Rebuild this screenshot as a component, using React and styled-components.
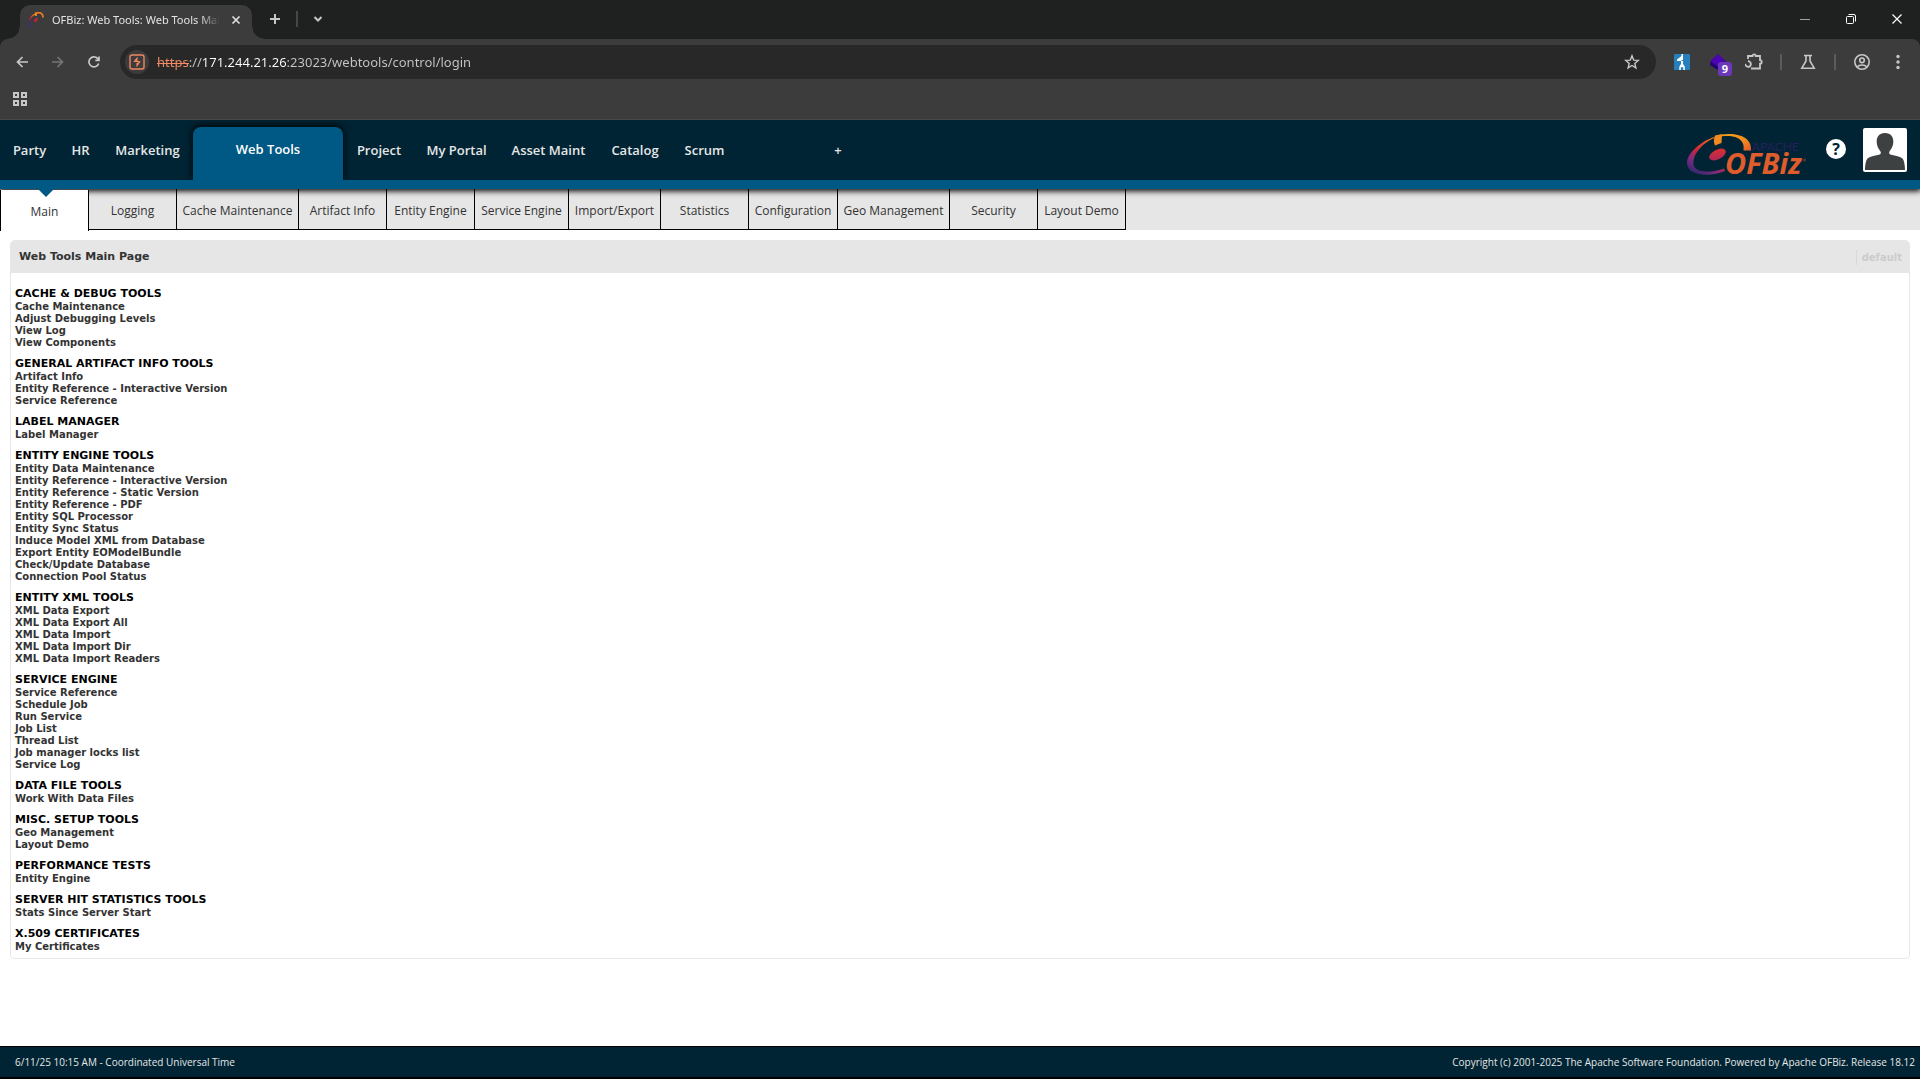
import React from 'react';
import styled, { createGlobalStyle, css } from 'styled-components';

const ui = '"Open Sans", "Noto Sans", sans-serif';
const chromeFont = '"Noto Sans", "Open Sans", sans-serif';
const verdana = '"DejaVu Sans", Verdana, sans-serif';

const GlobalStyle = createGlobalStyle`
  *, *::before, *::after { box-sizing: border-box; }
  body { margin: 0; background: #fff; font-family: ${verdana}; }
  a { text-decoration: none; color: inherit; }
  button { border: 0; padding: 0; background: none; color: inherit; font: inherit; cursor: pointer; }
  h1, h2, ul { margin: 0; padding: 0; list-style: none; }
  svg { display: block; flex: none; }
`;

const Page = styled.div`
  min-height: 100vh;
  display: flex;
  flex-direction: column;
`;

/* ---------- browser window ---------- */

const TabStrip = styled.div`
  display: flex;
  height: 39px;
  padding-left: 20px;
  background: #1f2121;
  color: #e3e3e3;
`;

const BrowserTab = styled.div`
  position: relative;
  display: flex;
  align-items: center;
  width: 232px;
  margin-top: 5px;
  padding: 0 8px 5px;
  gap: 8px;
  border-radius: 10px 10px 0 0;
  background: #3c3c3c;

  &::before,
  &::after {
    content: '';
    position: absolute;
    bottom: 0;
    width: 12px;
    height: 12px;
  }
  &::before {
    left: -12px;
    background: radial-gradient(circle at 0 0, transparent 11px, #3c3c3c 12px);
  }
  &::after {
    right: -12px;
    background: radial-gradient(circle at 100% 0, transparent 11px, #3c3c3c 12px);
  }
`;

const TabTitle = styled.span`
  flex: 1;
  overflow: hidden;
  white-space: nowrap;
  font: 11px/20px ${chromeFont};
  mask-image: linear-gradient(to right, #000 148px, transparent 168px);
`;

const IconButton = styled.button`
  display: flex;
  align-items: center;
  justify-content: center;
  width: ${(p) => p.$w || 36}px;
  height: ${(p) => p.$h || 34}px;
  color: ${(p) => p.$color || '#c7c7c7'};
`;

const StripDivider = styled.span`
  width: 2px;
  height: 16px;
  margin-top: 11px;
  background: #474747;
`;

const WindowControls = styled.div`
  display: flex;
  margin-left: auto;
`;

const Chrome = styled.div`
  background: #1f2121;
`;

const ChromeBody = styled.div`
  border-radius: 8px 8px 0 0;
  border-bottom: 1px solid #484848;
  background: #3c3c3c;
`;

const Toolbar = styled.div`
  display: flex;
  align-items: center;
  height: 45px;
  padding: 1px 4px 0;
`;

const Address = styled.label`
  flex: 1;
  display: flex;
  align-items: center;
  height: 34px;
  margin: 0 8px;
  padding-left: 5px;
  border-radius: 17px;
  background: #282828;
`;

const SiteBadge = styled.span`
  display: flex;
  align-items: center;
  justify-content: center;
  width: 24px;
  height: 24px;
  margin-right: 8px;
  border-radius: 50%;
  background: #3c3c3c;
`;

const UrlInput = styled.input`
  flex: 1;
  height: 22px;
  padding: 0;
  border: 0;
  outline: 0;
  font: 13px/22px ${chromeFont};
  color: transparent;
  background:
    linear-gradient(#f28b64, #f28b64) 0 12px / 32px 1px no-repeat padding-box,
    linear-gradient(to right, #f28b64 32px, #c7c7c7 32px, #c7c7c7 45px, #fff 45px, #fff 129px, #c7c7c7 129px) text;
`;

const ToolDivider = styled.span`
  width: 2px;
  height: 16px;
  margin: 0 8px;
  background: #5c5c5c;
`;

const Extension = styled.span`
  position: relative;
  display: block;
  width: 24px;
  height: 24px;
`;

const Badge = styled.span`
  position: absolute;
  left: 12px;
  top: 12px;
  width: 14px;
  height: 14px;
  border-radius: 3px;
  background: #6b38bb;
  color: #fff;
  font: 700 11px/14px ${ui};
  text-align: center;
`;

const Bookmarks = styled.div`
  display: flex;
  height: 35px;
  padding-left: 2px;
`;

/* ---------- application header ---------- */

const Header = styled.header`
  position: relative;
  z-index: 1;
  display: flex;
  height: 69px;
  border-bottom: 9px solid #005884;
  background: #002434;
  box-shadow: 0 1px 6px 1px #000;
  clip-path: inset(0 0 -12px 0);
`;

const AppNav = styled.nav`
  display: flex;
  color: #e6e6e6;
  font: 600 13px/60px ${ui};
`;

const AppLink = styled.a`
  display: block;
  width: ${(p) => p.$w}px;
  text-align: center;
  white-space: nowrap;
  ${(p) => p.$current && css`
    margin-top: 7px;
    border-radius: 8px 8px 0 0;
    background: #005884;
    box-shadow: 0 -1px 8px #000;
    clip-path: inset(-12px -12px 0 -12px);
    color: #fff;
    line-height: 44px;
  `}
`;

const AddLink = styled.a`
  width: 16px;
  margin-left: 92px;
  text-align: center;
`;

const HeaderTools = styled.div`
  display: flex;
  align-items: flex-start;
  margin-left: auto;
  padding: 8px 13px 0 0;
`;

const HelpButton = styled.button`
  width: 20px;
  height: 20px;
  margin: 11px 17px 0 16px;
  border-radius: 50%;
  background: #fff;
  color: #002434;
  font: 700 16px/20px ${ui};
`;

const Avatar = styled.a`
  display: block;
  padding: 2px;
  border-radius: 2px;
  background: #fff;
`;

const SubNav = styled.nav`
  display: flex;
  height: 41px;
  background: #e6e6e6;
  color: #333;
  font: 12px/43px ${ui};
`;

const SubLink = styled.a`
  position: relative;
  width: ${(p) => p.$w}px;
  height: 41px;
  border-right: 1px solid #000;
  border-bottom: 1px solid #000;
  text-align: center;
  white-space: nowrap;
  ${(p) => p.$current && css`
    z-index: 2;
    margin-top: 1px;
    border-left: 1px solid #000;
    border-bottom: 0;
    background: #fff;
    &::before {
      content: '';
      position: absolute;
      left: 37px;
      top: -1px;
      border: 8px solid transparent;
      border-top-color: #005884;
      border-bottom: 0;
    }
  `}
`;

/* ---------- content ---------- */

const Main = styled.main`
  flex: 1;
  padding: 10px;
`;

const Panel = styled.section`
  border: 1px solid #e6e6e6;
  border-top: 0;
  border-radius: 5px;
  overflow: hidden;
`;

const PanelBar = styled.div`
  display: flex;
  align-items: center;
  justify-content: space-between;
  height: 33px;
  padding: 1px 7px 0 8px;
  background: #e6e6e6;
`;

const PanelTitle = styled.h1`
  color: #333;
  font: 700 11px/16px ${verdana};
`;

const DefaultLink = styled.a`
  padding-left: 5px;
  border-left: 1px solid #d8d8d8;
  color: #ccc;
  font: 700 10px/15px ${verdana};
`;

const Groups = styled.div`
  display: flex;
  flex-direction: column;
  gap: 8px;
  padding: 14px 4px 5px;
`;

const GroupTitle = styled.h2`
  color: #000;
  font: 700 11px/14px ${verdana};
`;

const GroupItem = styled.li`
  color: #333;
  font: 700 10px/12px ${verdana};
`;

const Footer = styled.footer`
  display: flex;
  justify-content: space-between;
  height: 33px;
  padding: 0 5px 0 15px;
  border: solid #000;
  border-width: 1px 0 2px;
  background: #002434;
  color: #e6e6e6;
  font: 10px/30px ${ui};
`;

const apps = [
  ['Party', 59],
  ['HR', 43],
  ['Marketing', 91],
  ['Web Tools', 150],
  ['Project', 72],
  ['My Portal', 83],
  ['Asset Maint', 101],
  ['Catalog', 72],
  ['Scrum', 67],
];

const sections = [
  ['Main', 89],
  ['Logging', 88],
  ['Cache Maintenance', 122],
  ['Artifact Info', 88],
  ['Entity Engine', 88],
  ['Service Engine', 94],
  ['Import/Export', 92],
  ['Statistics', 88],
  ['Configuration', 89],
  ['Geo Management', 112],
  ['Security', 88],
  ['Layout Demo', 88],
];

const groups = [
  ['CACHE & DEBUG TOOLS', ['Cache Maintenance', 'Adjust Debugging Levels', 'View Log', 'View Components']],
  ['GENERAL ARTIFACT INFO TOOLS', ['Artifact Info', 'Entity Reference - Interactive Version', 'Service Reference']],
  ['LABEL MANAGER', ['Label Manager']],
  ['ENTITY ENGINE TOOLS', [
    'Entity Data Maintenance', 'Entity Reference - Interactive Version', 'Entity Reference - Static Version',
    'Entity Reference - PDF', 'Entity SQL Processor', 'Entity Sync Status', 'Induce Model XML from Database',
    'Export Entity EOModelBundle', 'Check/Update Database', 'Connection Pool Status',
  ]],
  ['ENTITY XML TOOLS', ['XML Data Export', 'XML Data Export All', 'XML Data Import', 'XML Data Import Dir', 'XML Data Import Readers']],
  ['SERVICE ENGINE', ['Service Reference', 'Schedule Job', 'Run Service', 'Job List', 'Thread List', 'Job manager locks list', 'Service Log']],
  ['DATA FILE TOOLS', ['Work With Data Files']],
  ['MISC. SETUP TOOLS', ['Geo Management', 'Layout Demo']],
  ['PERFORMANCE TESTS', ['Entity Engine']],
  ['SERVER HIT STATISTICS TOOLS', ['Stats Since Server Start']],
  ['X.509 CERTIFICATES', ['My Certificates']],
];

const Line = ({ size = 16, sw = 2, children, ...rest }) => (
  <svg width={size} height={size} viewBox={`0 0 ${size} ${size}`} fill="none" stroke="currentColor" strokeWidth={sw} {...rest}>
    {children}
  </svg>
);

const Favicon = () => (
  <svg width="16" height="16" viewBox="0 0 16 16" fill="none">
    <defs>
      <linearGradient id="fav" x1="0.8" y1="0" x2="0.2" y2="1">
        <stop offset="0" stopColor="#f7941d" />
        <stop offset="0.4" stopColor="#d2232a" />
        <stop offset="0.8" stopColor="#3b2a80" />
      </linearGradient>
    </defs>
    <path d="M7 2C3.500 4 .8 8 .8 11.500c0 3 2 3.800 4.500 3.200" stroke="url(#fav)" strokeWidth="1.300" />
    <path d="M7 1.500c4-1.500 8-1 8 4" stroke="#f07f22" strokeWidth="1.600" />
    <path d="M8 .5v3.500" stroke="#f07f22" strokeWidth="2" />
    <ellipse cx="8" cy="8" rx="2.300" ry="1.400" transform="rotate(-45 8 8)" fill="#c8203c" />
  </svg>
);

const OfbizLogo = () => (
  <svg width="130" height="49" viewBox="0 3 130 49" role="img" aria-label="Apache OFBiz">
    <defs>
      <linearGradient id="swoosh" x1="0.8" y1="0" x2="0.25" y2="1">
        <stop offset="0" stopColor="#f7941d" />
        <stop offset="0.25" stopColor="#e8502a" />
        <stop offset="0.5" stopColor="#c9263f" />
        <stop offset="0.75" stopColor="#7b2a80" />
        <stop offset="1" stopColor="#2b2a6c" />
      </linearGradient>
      <linearGradient id="arc" x1="0" y1="0" x2="1" y2="1">
        <stop offset="0" stopColor="#f9a11b" />
        <stop offset="0.6" stopColor="#f58a1f" />
        <stop offset="1" stopColor="#e4572e" />
      </linearGradient>
      <linearGradient id="dot" x1="1" y1="0" x2="0" y2="1">
        <stop offset="0" stopColor="#e0322d" />
        <stop offset="1" stopColor="#a8245c" />
      </linearGradient>
    </defs>
    <path d="M34 12C18 18 7 29 7 38c0 9 11 13 24 11.500 5-.5 10-1.500 14-3.500l-1-2.500C38 46 31 47 25 46.500 16 46 12.500 42 13.500 35.500 15 27 23 18 34 13z" fill="url(#swoosh)" />
    <path d="M41 9.500c7-1 15-.8 20.500 1.500 7 3 10 8 9.500 14.500h-7.500c.8-6-1-10-6-12.500-4-2-11-2.300-16.500-1.500z" fill="url(#arc)" />
    <path d="M35 10.500l7-1.500-.5 9-6.500 2.500c-1.500-3-1.500-6.500 0-10z" fill="#f28a22" />
    <ellipse cx="37.500" cy="29.500" rx="9" ry="4.800" transform="rotate(-27 37.500 29.500)" fill="url(#dot)" />
    <text x="72" y="26" fill="#26205a" fontFamily="Lato, sans-serif" fontSize="12">APACHE</text>
    <text x="45" y="49" fill="#e05c2c" fontFamily='"Open Sans", sans-serif' fontSize="29" fontWeight="700" fontStyle="italic">OFBiz</text>
    <circle cx="124.500" cy="35" r="1" fill="none" stroke="#9a4a38" strokeWidth="0.700" />
  </svg>
);

const BrowserChrome = () => (
  <>
    <TabStrip>
      <BrowserTab>
        <Favicon />
        <TabTitle>OFBiz: Web Tools: Web Tools Main Page</TabTitle>
        <IconButton $w={16} $h={16} $color="#e3e3e3" aria-label="Close tab">
          <Line size={10}><path d="M1.500 1.500l7 7M8.500 1.500l-7 7" strokeWidth="1.600" /></Line>
        </IconButton>
      </BrowserTab>
      <IconButton $w={44} $h={38} aria-label="New tab">
        <svg width="12" height="12" viewBox="0 0 12 12" stroke="currentColor" strokeWidth="2"><path d="M7 1v10M2 6h10" /></svg>
      </IconButton>
      <StripDivider />
      <IconButton $w={40} $h={38} aria-label="Search tabs">
        <Line size={10}><path d="M1.500 3L5 6.500 8.500 3" /></Line>
      </IconButton>
      <WindowControls>
        <IconButton $w={46} $h={38} $color="#a0a0a0" aria-label="Minimize"><Line size={10} sw={1}><path d="M0 5.500h10" /></Line></IconButton>
        <IconButton $w={46} $h={38} $color="#fff" aria-label="Restore">
          <Line size={10} sw={1}><rect x=".5" y="2.500" width="7" height="7" rx="1" /><path d="M2.500 .5H8A1.500 1.500 0 0 1 9.500 2v5.500" /></Line>
        </IconButton>
        <IconButton $w={46} $h={38} $color="#fff" aria-label="Close"><Line size={10} sw={1.2}><path d="M.5.5l9 9M9.500.5l-9 9" /></Line></IconButton>
      </WindowControls>
    </TabStrip>
    <Chrome>
      <ChromeBody>
        <Toolbar>
          <IconButton aria-label="Back"><Line size={12}><path d="M12 6H1.500M6.500 1L1.500 6l5 5" strokeWidth="1.700" /></Line></IconButton>
          <IconButton $color="#757575" aria-label="Forward"><Line size={12}><path d="M0 6h10.500M5.500 1l5 5-5 5" strokeWidth="1.700" /></Line></IconButton>
          <IconButton aria-label="Reload">
            <Line size={12}><path d="M10.700 7.500A5 5 0 1 1 9.700 2.600L11 4M11 .5V4.300H7.300" strokeWidth="1.700" /></Line>
          </IconButton>
          <Address>
            <SiteBadge>
              <svg width="16" height="16" viewBox="0 0 16 16" fill="none" stroke="#f08660">
                <rect x="1" y="1" width="14" height="14" rx="2" strokeWidth="1.400" />
                <path d="M8.500 3v4L5 8.300zM7.500 13V9L11 7.700z" fill="#f08660" stroke="none" />
                <path d="M8.300 3.500L5 7.500h6L7.700 12.500" strokeWidth="1" />
              </svg>
            </SiteBadge>
            <UrlInput aria-label="Address" defaultValue="https://171.244.21.26:23023/webtools/control/login" />
            <IconButton $w={48} aria-label="Bookmark this page">
              <svg width="16" height="16" viewBox="0 0 16 16" fill="none" stroke="currentColor" strokeWidth="1.400"><path d="M8 1.800l1.700 4.300 4.600.3-3.500 3 1.100 4.500L8 11.500l-3.900 2.400 1.100-4.500-3.500-3 4.600-.3z" /></svg>
            </IconButton>
          </Address>
          <IconButton aria-label="Burp extension">
            <svg width="16" height="16" viewBox="0 0 16 16">
              <rect width="16" height="16" rx="1" fill="#2580bd" />
              <path d="M7.500 0H9v6H7.500v1H9v3l1.800 2.500V16H9.300v-2.800H6.800V16H5.300v-3.200L7 10V7H3V5.500L7.500 2z" fill="#fff" />
            </svg>
          </IconButton>
          <IconButton aria-label="Stack extension">
            <Extension>
              <svg width="24" height="24" viewBox="0 0 24 24">
                <path d="M4 15l8 5 8-5-1-4H5z" fill="#21006e" />
                <path d="M4 11l8-7 8 7-8 6z" fill="#4a05b0" />
              </svg>
              <Badge>9</Badge>
            </Extension>
          </IconButton>
          <IconButton aria-label="Extensions">
            <svg width="18" height="18" viewBox="0 0 18 18" fill="none" stroke="currentColor" strokeWidth="1.800">
              <path d="M3 6V3H7.500a1.600 1.600 0 0 1 3.200 0H15v4.200a1.600 1.600 0 0 1 0 3.400V15.500H6M0 11c1 3.500 4.500 3.500 5.500 1.500 1-2.200-.5-4.200-2.500-4.500" />
            </svg>
          </IconButton>
          <ToolDivider />
          <IconButton aria-label="Experiments">
            <svg width="16" height="16" viewBox="0 0 16 16" fill="none" stroke="currentColor" strokeWidth="1.600"><path d="M4 1.500h8M6 1.500v5.500L1.800 14.200h12.400L10 7V1.500" /></svg>
          </IconButton>
          <ToolDivider />
          <IconButton aria-label="Profile">
            <svg width="18" height="18" viewBox="0 0 18 18" fill="none" stroke="currentColor" strokeWidth="1.600"><circle cx="9" cy="9" r="7.200" /><circle cx="9" cy="7.300" r="2.300" /><path d="M4 14c2.500-2.600 7.500-2.600 10 0" /></svg>
          </IconButton>
          <IconButton aria-label="Menu">
            <svg width="4" height="16" viewBox="0 0 4 16" fill="currentColor"><circle cx="2" cy="2.500" r="1.700" /><circle cx="2" cy="8" r="1.700" /><circle cx="2" cy="13.500" r="1.700" /></svg>
          </IconButton>
        </Toolbar>
        <Bookmarks>
          <IconButton $h={30} aria-label="Apps">
            <Line size={14}><path d="M1 1h4v4H1zM9 1h4v4H9zM1 9h4v4H1zM9 9h4v4H9z" /></Line>
          </IconButton>
        </Bookmarks>
      </ChromeBody>
    </Chrome>
  </>
);

export default function App() {
  return (
    <Page>
      <GlobalStyle />
      <BrowserChrome />
      <Header>
        <AppNav aria-label="Applications">
          {apps.map(([name, w]) => (
            <AppLink key={name} href="#" $w={w} $current={name === 'Web Tools'}>{name}</AppLink>
          ))}
          <AddLink href="#" aria-label="More applications">+</AddLink>
        </AppNav>
        <HeaderTools>
          <OfbizLogo />
          <HelpButton aria-label="Help">?</HelpButton>
          <Avatar href="#" aria-label="User preferences">
            <svg width="40" height="40" viewBox="0 0 40 40" fill="#3e4142">
              <path d="M20 3c6 0 8.500 4 8.300 9-.2 5-2.300 7-3.800 9.500-.8 1.500-.3 2.700 1.500 3.300 4 1 9.500 1.500 11.700 4C39.300 31 40 36 40 40H0c0-4 .7-9 2.300-11.200 2.200-2.500 7.700-3 11.700-4 1.800-.6 2.300-1.800 1.500-3.300C14 19 11.900 17 11.700 12 11.500 7 14 3 20 3z" />
            </svg>
          </Avatar>
        </HeaderTools>
      </Header>
      <SubNav aria-label="Web Tools">
        {sections.map(([name, w]) => (
          <SubLink key={name} href="#" $w={w} $current={name === 'Main'}>{name}</SubLink>
        ))}
      </SubNav>
      <Main>
        <Panel>
          <PanelBar>
            <PanelTitle>Web Tools Main Page</PanelTitle>
            <DefaultLink href="#">default</DefaultLink>
          </PanelBar>
          <Groups>
            {groups.map(([title, links]) => (
              <section key={title}>
                <GroupTitle>{title}</GroupTitle>
                <ul>
                  {links.map((text) => (
                    <GroupItem key={text}><a href="#">{text}</a></GroupItem>
                  ))}
                </ul>
              </section>
            ))}
          </Groups>
        </Panel>
      </Main>
      <Footer>
        <span>6/11/25 10:15 AM - Coordinated Universal Time</span>
        <span>Copyright (c) 2001-2025 The Apache Software Foundation. Powered by Apache OFBiz. Release 18.12</span>
      </Footer>
    </Page>
  );
}
